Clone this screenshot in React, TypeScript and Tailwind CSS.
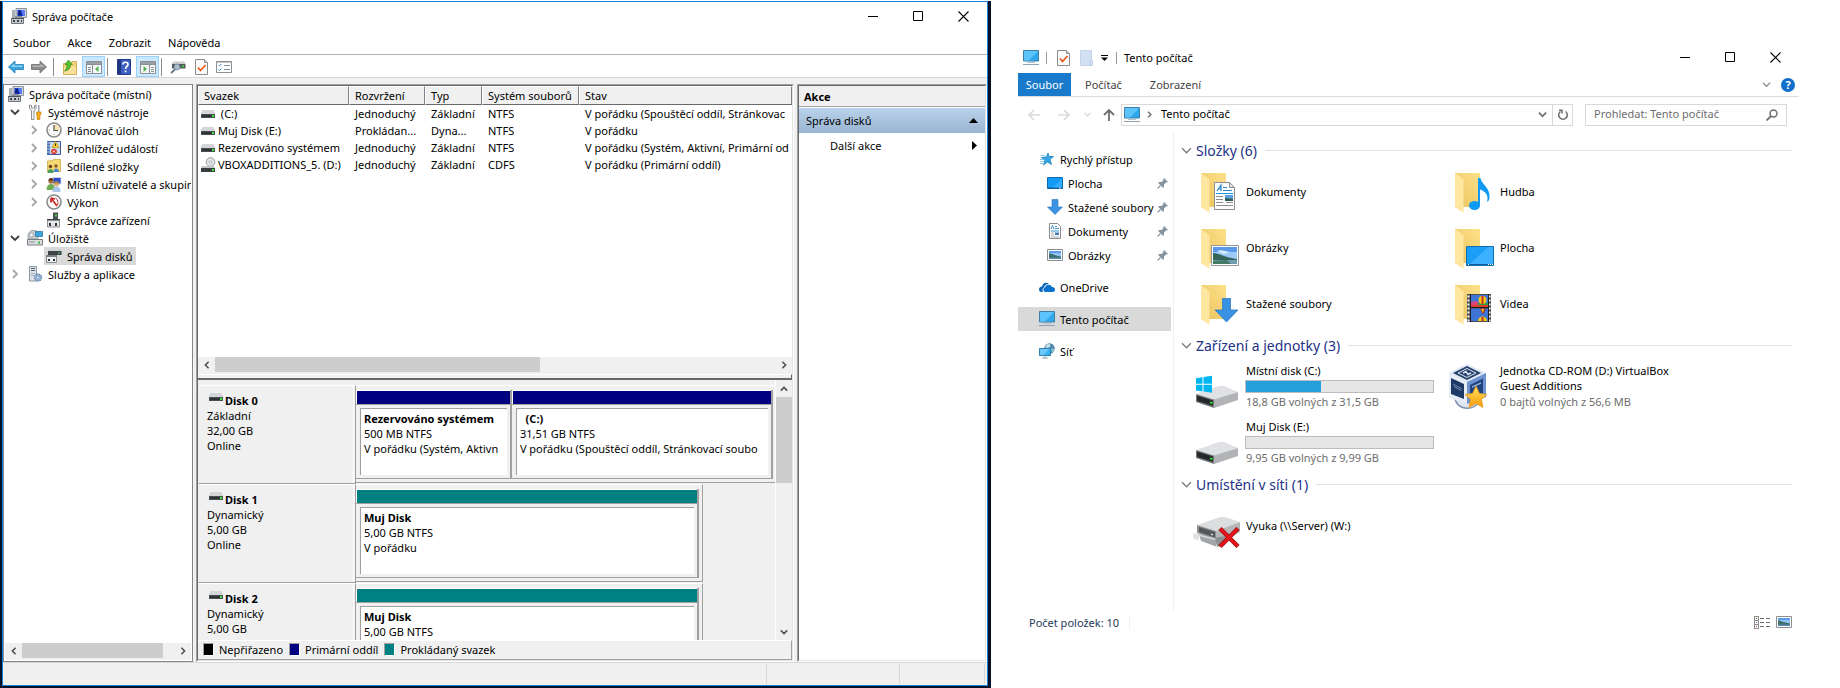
/**
 * Two desktop windows side by side.
 * Left: computer management console (tree / volumes / disk map / actions).
 * Right: file explorer on the "Tento počítač" location.
 */

import type { ReactNode } from "react";

type IconProps = { className?: string };

/* ── 16px icons ── */

function Svg16({ children, className = "" }: { children: ReactNode; className?: string }) {
  return (
    <svg viewBox="0 0 16 16" className={`h-4 w-4 shrink-0 ${className}`} aria-hidden="true">
      {children}
    </svg>
  );
}

function ConsoleIcon() {
  return (
    <Svg16>
      <path d="M5 0.5h10.5v9H5z" fill="#d5d9de" stroke="#8d949c" />
      <path d="M6.500 2h7.500v6H6.500z" fill="#1432c4" />
      <path d="M10 2h4v6h-2z" fill="#5b7df0" />
      <path d="M1 2h3v9H1z" fill="#a9b0b8" />
      <path d="M4 8h7v2H4z" fill="#8b9299" />
      <path d="M0.500 10.500h12v5h-12z" fill="#c5c9cd" stroke="#70777d" />
      <path d="M2 12h2v2H2zM6 12h2v2H6zM10 12h1v2h-1z" fill="#3c4248" />
      <path d="M0 10h13v1H0z" fill="#4d555c" />
      <path d="M8 3l1 0 1.500 4h-4z" fill="#0b1d75" />
    </Svg16>
  );
}

function ToolsIcon() {
  return (
    <Svg16>
      <path d="M2.500 1v3.500L4.500 7v8.500h2.500V7l2-2.500V1L7.500 1.500V4H4.500V1.500z" fill="#f2f3f4" stroke="#7f8489" strokeWidth="0.9" />
      <path d="M11 1h1.500v7H11z" fill="#9aa0a6" />
      <path d="M9.500 8h4.500v2.500l-1 1V15.500h-3v-4l-.5-1z" fill="#f5a81c" stroke="#c07d0a" strokeWidth="0.6" />
    </Svg16>
  );
}

function ClockIcon() {
  return (
    <Svg16>
      <circle cx="8" cy="8" r="7" fill="#fbfbfb" stroke="#8b8b8b" strokeWidth="1.600" />
      <path d="M8 8V2.500A5.500 5.500 0 0 1 13.500 8z" fill="#fbe3a6" />
      <path d="M8 3v5.500h4" fill="none" stroke="#4a4f58" strokeWidth="1.200" />
      <path d="M8 13v-1M3 8h1" stroke="#888" />
    </Svg16>
  );
}

function EventIcon() {
  return (
    <Svg16>
      <path d="M2.500 1.500h12v13h-12z" fill="#c9d9ee" stroke="#3d5a96" />
      <path d="M1 1h3v14H1z" fill="#4a6fb3" />
      <path d="M1 3h3M1 6h3M1 9h3M1 12h3" stroke="#dfe8f6" strokeWidth="0.8" />
      <path d="M9.500 1.500l3.500 6H6z" fill="#ffd42e" stroke="#b98c00" strokeWidth="0.6" />
      <path d="M9.500 3.500v2.500" stroke="#3b2d00" />
      <circle cx="8" cy="11.500" r="2.800" fill="#d9332b" />
      <path d="M7 10.500l2 2m0-2l-2 2" stroke="#fff" strokeWidth="0.9" />
    </Svg16>
  );
}

function SharedIcon() {
  return (
    <Svg16>
      <path d="M1.500 4V3l5-0.500 1-1h7v12h-13z" fill="#f6d873" stroke="#c9a23a" strokeWidth="0.7" />
      <circle cx="4.500" cy="8.500" r="1.800" fill="#70451c" />
      <path d="M1.500 15c0-3 1.500-4 3-4s3 1 3 4z" fill="#4da05c" />
      <circle cx="10" cy="8" r="1.800" fill="#8b5a28" />
      <path d="M7.500 14c0-2.500 1-3.500 2.500-3.500s3 1 3 3.500z" fill="#4d86c4" />
    </Svg16>
  );
}

function UsersIcon() {
  return (
    <Svg16>
      <path d="M6.500 1h9v7.500h-9z" fill="#d0d4d9" />
      <path d="M7.500 2h7v5.500h-7z" fill="#2c4fd2" />
      <circle cx="5" cy="5" r="2.700" fill="#a87242" />
      <path d="M2.500 4.500C2.500 1 7.500 1 7.500 4.500z" fill="#5b3515" />
      <path d="M0.500 14c0-4 1.500-6 4.500-6s4 2 4 6z" fill="#6fae54" />
      <circle cx="10.500" cy="8" r="2.500" fill="#e0b07f" />
      <path d="M8 7.500C8 4.500 13 4.500 13 7.500z" fill="#b0803a" />
      <path d="M6.500 16c0-4 1.500-5.500 4-5.500s4 1.500 4 5.500z" fill="#a8c6ea" />
    </Svg16>
  );
}

function GaugeIcon() {
  return (
    <Svg16>
      <circle cx="8" cy="8" r="7" fill="#fdfdfd" stroke="#8a8a8a" strokeWidth="1.600" />
      <path d="M5 4l6 8M5 4v4.500M5 4l4 1" stroke="#d22626" strokeWidth="1.700" fill="none" />
      <path d="M9.500 4c2.500 1.500 3 4.500 2 7" stroke="#c93a3a" fill="none" />
    </Svg16>
  );
}

function DeviceIcon() {
  return (
    <Svg16>
      <path d="M7 0.500h5v7H7z" fill="#4b5055" />
      <path d="M9 2.500h2v2H9z" fill="#45d94a" />
      <path d="M1 7h13v2H1z" fill="#43484d" />
      <path d="M1.500 8.500h12v6.500h-12z" fill="#e3e5e7" stroke="#8b9096" />
      <path d="M3 11h2v3H3zM9 11h2v3H9z" fill="#30353a" />
    </Svg16>
  );
}

function StorageIcon() {
  return (
    <Svg16>
      <path d="M1 4l3-3.500h5L11 4v5H1z" fill="#c8cccf" stroke="#8b9095" strokeWidth="0.7" />
      <circle cx="4.500" cy="5" r="2" fill="#f3f4f5" stroke="#8f949a" strokeWidth="0.7" />
      <path d="M8.500 1.500h7v5h-7z" fill="#39a5dc" stroke="#1d6f9d" strokeWidth="0.7" />
      <path d="M0.500 9.500h15v5.500h-15z" fill="#dcdee0" stroke="#767c82" />
      <path d="M11 11.500h2v2h-2z" fill="#34b244" />
      <path d="M2 12h6" stroke="#8b9095" />
    </Svg16>
  );
}

function DiskMgmtIcon() {
  return (
    <Svg16>
      <path d="M2 3l2-2h10l1.500 2z" fill="#d0d3d6" />
      <path d="M2 3h13.500v4H2z" fill="#3d4247" />
      <path d="M12 4.500h2v1h-2z" fill="#3fe04a" />
      <path d="M0.500 8.500h10v6h-10z" fill="#eceeef" stroke="#8b9096" />
      <path d="M0 7h11v2H0z" fill="#7a7f84" />
      <path d="M2 11h2v2H2zM7 11h2v2H7z" fill="#30353a" />
    </Svg16>
  );
}

function ServicesIcon() {
  return (
    <Svg16>
      <path d="M2.500 0.500h7v14.500h-7z" fill="#dce2e8" stroke="#8996a3" />
      <path d="M4 2.500h4M4 4.500h4" stroke="#566371" />
      <path d="M4 7.500h4M4 9.500h3" stroke="#a5b1bc" />
      <circle cx="11" cy="11.500" r="3.500" fill="#9dbbdc" stroke="#5c82ae" strokeWidth="1.300" strokeDasharray="1.500 0.900" />
      <circle cx="11" cy="11.500" r="1.300" fill="#fff" stroke="#5c82ae" strokeWidth="0.7" />
    </Svg16>
  );
}

function DriveIcon({ className = "" }: IconProps) {
  return (
    <svg viewBox="0 0 14 8" className={`h-2 w-3.5 shrink-0 ${className}`} shapeRendering="crispEdges" aria-hidden="true">
      <path d="M1 0h12l1 4H0z" fill="#d3d5d8" />
      <path d="M0 4h14v4H0z" fill="#4c4f52" />
      <path d="M1 5h12v2H1z" fill="#303336" />
      <path d="M11 5h2v2h-2z" fill="#35f03a" />
    </svg>
  );
}

function CdDriveIcon() {
  return (
    <svg viewBox="0 0 15 16" className="-mr-px h-4 w-[15px] shrink-0" aria-hidden="true">
      <circle cx="9.500" cy="5" r="4.300" fill="#e4e6e8" stroke="#979b9f" />
      <circle cx="9.500" cy="5" r="1.300" fill="#fff" stroke="#979b9f" strokeWidth="0.7" />
      <path d="M1 9h12l1 2H0z" fill="#c5c8cb" />
      <path d="M0 11h14v4H0z" fill="#3a3d40" />
      <path d="M11 12h2v2h-2z" fill="#35f03a" />
    </svg>
  );
}

function BackArrow() {
  return (
    <Svg16>
      <path d="M0.500 8L7 2v3.500h8.500v5H7V14z" fill="#3aa4dc" stroke="#1f7fb8" strokeWidth="0.8" />
      <path d="M2.500 8L6.500 4.500V6.500h8v1.500z" fill="#8fd0f2" />
    </Svg16>
  );
}

function ForwardArrow() {
  return (
    <Svg16>
      <path d="M15.500 8L9 2v3.500H0.500v5H9V14z" fill="#8d8d8d" stroke="#6b6b6b" strokeWidth="0.8" />
      <path d="M13.500 8L9.500 4.500V6.500h-8v1.500z" fill="#b3b3b3" />
    </Svg16>
  );
}

function FolderUpIcon() {
  return (
    <Svg16>
      <path d="M1.500 4.500h7l1.500-2h4.500v13h-13z" fill="#f3d47c" stroke="#c59f3f" strokeWidth="0.8" />
      <path d="M2 8h12v7H2z" fill="#f8e09a" />
      <path d="M2.500 12c1.500-1 2.500-3 2.500-6.500H3L6.500 1l4 4.500H8.500c0 4-2 6-6 6.500z" fill="#55c02e" stroke="#2f8416" strokeWidth="0.6" />
    </Svg16>
  );
}

function PaneIcon({ side }: { side: "left" | "right" }) {
  return (
    <Svg16 className={side === "right" ? "-scale-x-100" : ""}>
      <path d="M0.500 2.500h15v12h-15z" fill="#f7f8f9" stroke="#8a8f94" />
      <path d="M1 3h14v2H1z" fill="#9aa0a6" />
      <path d="M1 5.500h14M6.500 6v8M2 8.500h3M2 10.500h3M2 12.500h3" stroke="#8a8f94" />
      <path d="M12.500 7v6L9 10z" fill="#4cb648" />
    </Svg16>
  );
}

function HelpBookIcon() {
  return (
    <svg viewBox="0 0 14 16" className="h-4 w-3.5 shrink-0" aria-hidden="true">
      <path d="M0.500 0.500h13v15h-13z" fill="#3f5fc4" stroke="#24388c" />
      <path d="M1 1h3v14H1z" fill="#20357f" />
      <path d="M6 5.500c0-3 5-3 5 0 0 2-2.500 2-2.500 4.500" fill="none" stroke="#fff" strokeWidth="1.700" />
      <path d="M7.700 11.500h1.700v1.700H7.700z" fill="#fff" />
    </svg>
  );
}

function DriveSearchIcon() {
  return (
    <Svg16>
      <path d="M2 4l2-1.500h10l1.500 1.500v1H2z" fill="#c9ccce" />
      <path d="M2 5h13.500v4.500H2z" fill="#55595d" />
      <path d="M12 6.500h2v1.500h-2z" fill="#37e53c" />
      <circle cx="7" cy="8" r="3" fill="#a9bccb" stroke="#75889a" strokeWidth="0.8" />
      <path d="M5 10.500L1 14" stroke="#68727b" strokeWidth="1.700" />
    </Svg16>
  );
}

function CheckDocIcon() {
  return (
    <svg viewBox="0 0 13 16" className="h-4 w-[13px] shrink-0" aria-hidden="true">
      <path d="M0.500 0.500h9l3 3v12h-12z" fill="#fbfbfb" stroke="#8b8b8b" />
      <path d="M9.500 0.500v3h3" fill="#dadada" stroke="#8b8b8b" />
      <path d="M3 8.500l2.500 3 5-5.500" fill="none" stroke="#e8591a" strokeWidth="1.700" />
    </svg>
  );
}

function ListPaneIcon() {
  return (
    <Svg16>
      <path d="M0.500 2.500h15v11h-15z" fill="#fff" stroke="#8a8f94" />
      <path d="M1 3h14" stroke="#8a8f94" />
      <path d="M2.500 6l1 1 2-2M2.500 10.500l1 1 2-2" fill="none" stroke="#3c8fd0" />
      <path d="M8 6.500h6M8 10.500h6" stroke="#8a8f94" />
    </Svg16>
  );
}

function MonitorIcon() {
  return (
    <Svg16>
      <path d="M0.500 0.500h15v10.500h-15z" fill="#2fa9ee" stroke="#3f7fa6" />
      <path d="M1 1h14L6 10.500H1z" fill="#5cc3fb" />
      <path d="M4 12.500h8" stroke="#b7c4cf" />
      <path d="M0 14.500h16" stroke="#8fa2b3" />
    </Svg16>
  );
}

function NewFolderIcon() {
  return (
    <svg viewBox="0 0 13 16" className="h-4 w-[13px] shrink-0" aria-hidden="true">
      <path d="M0.500 0.500h11v9l1 .500v5.500h-12z" fill="#d3e0f3" stroke="#c5d4ea" />
      <path d="M10 9.500v6" stroke="#b7c9e4" />
    </svg>
  );
}

function StarIcon() {
  return (
    <Svg16>
      <path d="M9 2l1 3.500h4.500L11 8.500l1.500 5L8.500 11l-4 3 1.500-4.500L2.500 6.500 7.500 6z" fill="#35a7e6" stroke="#1980bd" strokeWidth="0.8" />
      <path d="M2 4.500h4M1 8.500h4M1.500 10.500h3.500M1 12.500h3" stroke="#79c0ea" strokeWidth="0.9" />
    </Svg16>
  );
}

function DesktopIcon() {
  return (
    <Svg16>
      <path d="M0.500 2.500h15v11h-15z" fill="#129bf6" stroke="#0f69ad" />
      <path d="M5 13L15 4v9z" fill="#32adff" />
      <path d="M1 13h14" stroke="#0f5d9b" />
      <path d="M12 13h2" stroke="#fff" strokeDasharray="1 0.500" />
    </Svg16>
  );
}

function DownArrowIcon() {
  return (
    <Svg16>
      <path d="M5 0.500h6V8h4.500L8 15.500 0.500 8H5z" fill="#3b93e2" stroke="#2a75bc" strokeWidth="0.6" />
    </Svg16>
  );
}

function DocIcon() {
  return (
    <Svg16>
      <path d="M2.500 0.500h8l3 3v12h-11z" fill="#fdfdfd" stroke="#8b8b8b" />
      <path d="M4 6l1.500-3.500L7 6M8 3.500h2M8 5.500h4" fill="none" stroke="#2f86c6" strokeWidth="0.9" />
      <path d="M4 8h8" stroke="#2f9bd8" />
      <path d="M4 10h3M4 12h3M4 14h8" stroke="#9b9b9b" strokeWidth="0.8" />
      <path d="M8 9.500h4V12H8z" fill="#3d7fb4" />
    </Svg16>
  );
}

function PictureIcon({ className = "" }: IconProps) {
  return (
    <Svg16 className={className}>
      <path d="M0.500 2.500h15v11h-15z" fill="#fff" stroke="#8b8f93" />
      <path d="M2 4h12v8H2z" fill="#8fc2f2" />
      <path d="M2 4h12v2H2z" fill="#5e9be8" />
      <path d="M2 6.500c3 0 5 2 12 3V12H2z" fill="#3f6f68" />
      <path d="M2 10.500h12V12H2z" fill="#5988ae" />
    </Svg16>
  );
}

function CloudIcon() {
  return (
    <Svg16>
      <path d="M0 10.500C0 8.500 1.500 7.500 3 7.500 3.200 4.500 7 2 10 5 7 5 5.500 6.500 5 8.500 3.500 9 3 11.500 4 13H2.500C1 13 0 12 0 10.500z" fill="#0a64b8" />
      <path d="M6 8.500C7 5 11.500 5 13 8c2 0 3 1.300 3 2.700 0 1.300-1 2.300-2.300 2.300H6.500C3.800 13 3.800 9 6 8.500z" fill="#0a72cc" />
    </Svg16>
  );
}

function NetworkIcon() {
  return (
    <Svg16>
      <circle cx="10.500" cy="5.500" r="5.200" fill="#4f86a8" />
      <path d="M8 1.500c2-1 4 0 3.500 1.500S9 4.500 7.500 5 6 3 8 1.500z" fill="#bfe0ea" />
      <path d="M12 6c2-1 3 0 3 1s-1 2.500-2 2.500z" fill="#8ec3d6" />
      <path d="M0.500 5.500h11v7h-11z" fill="#36b0f2" stroke="#2e7fb0" />
      <path d="M1 6h9L5 12H1z" fill="#6cc8fb" />
      <path d="M3 15h6M6 13v2" stroke="#8fa2b3" />
    </Svg16>
  );
}

function PinIcon() {
  return (
    <svg viewBox="0 0 11 11" className="h-[11px] w-[11px] shrink-0" aria-hidden="true">
      <path d="M7 0l4 4-1 .500L9 4.500 7 6.500 7 9 6 9.800 1.200 5 2 4l2.500 0 2-2L6.300 1z" fill="#8593a0" />
      <path d="M3.500 7.500L0.500 10.500" stroke="#8593a0" strokeWidth="1.100" />
    </svg>
  );
}

/* ── Chevron used by scrollbars, trees and headings ── */
const CHEVRON = {
  left: "M7 1L3 5l4 4",
  right: "M3 1l4 4-4 4",
  up: "M1 7l4-4 4 4",
  down: "M1 3l4 4 4-4",
};

function Chevron({ dir, className = "", width = 2 }: { dir: keyof typeof CHEVRON; className?: string; width?: number }) {
  return (
    <svg viewBox="0 0 10 10" className={`shrink-0 ${className}`} fill="none" stroke="currentColor" strokeWidth={width} aria-hidden="true">
      <path d={CHEVRON[dir]} />
    </svg>
  );
}

function WindowControls() {
  return (
    <div className="flex items-center gap-[34px]">
      <button type="button" aria-label="Minimalizovat" className="flex h-6 w-[11px] items-center">
        <svg viewBox="0 0 11 11" className="h-[11px] w-[11px]" shapeRendering="crispEdges"><path d="M0 5.500h10" stroke="#000" /></svg>
      </button>
      <button type="button" aria-label="Maximalizovat" className="flex h-6 w-[11px] items-center">
        <svg viewBox="0 0 11 11" className="h-[11px] w-[11px]"><path d="M0.500 0.500h9v9h-9z" fill="none" stroke="#000" /></svg>
      </button>
      <button type="button" aria-label="Zavřít" className="flex h-6 w-[11px] items-center">
        <svg viewBox="0 0 11 11" className="h-[11px] w-[11px]"><path d="M0.500 0.500l10 10M10.500 0.500l-10 10" stroke="#000" strokeWidth="1.100" /></svg>
      </button>
    </div>
  );
}

/* ── Large explorer icons, 48px canvas ── */

function Svg48({ children }: { children: ReactNode }) {
  return (
    <svg viewBox="0 0 48 48" className="h-12 w-12 shrink-0" aria-hidden="true">
      {children}
    </svg>
  );
}

function Landscape() {
  return (
    <g>
      <path d="M18.500 21.500h27v20h-27z" fill="#fff" stroke="#94989c" />
      <path d="M20 23h24v17H20z" fill="#9ccbf5" />
      <path d="M20 23h24v5H20z" fill="#5b98ea" />
      <path d="M24 27c4-2 8 0 13 1l-6 2z" fill="#d9ecfb" />
      <path d="M20 29c6 0 10 4 24 6v2H20z" fill="#35645a" />
      <path d="M20 36h24v4H20z" fill="#6f9fae" />
      <path d="M20 37l14-1 4 4H20z" fill="#447b68" />
    </g>
  );
}

function VideoStrip() {
  return (
    <g>
      <path d="M20 14h24v28H20z" fill="#4d4d4d" />
      <path d="M21.500 15.500v26M42.500 15.500v26" stroke="#fff" strokeWidth="2" strokeDasharray="2 2" />
      <path d="M24 15h17v12H24zM24 28.500h17V41H24z" fill="#3d74d6" />
      <path d="M24 22l5-1 4 3v3h-9z" fill="#e0457b" />
      <path d="M31 23h10v4H31z" fill="#2f9e3f" />
      <path d="M24 25h17v2H24z" fill="#d93f2a" />
      <circle cx="35.500" cy="20" r="4" fill="#f5c819" />
      <path d="M35.500 16v8" stroke="#c53318" strokeWidth="2" />
      <path d="M33 28.500h6l-3 6z" fill="#b3231c" />
      <path d="M34 29h3l-1 4z" fill="#f5c819" />
      <path d="M31 41c0-6 9-6 9 0z" fill="#f5c819" />
      <path d="M34.500 37h2v4h-2z" fill="#c53318" />
      <path d="M23.500 14v28M41.500 14v28M23.500 27.500h18" stroke="#1d1d1d" />
    </g>
  );
}

function FolderIcon({ kind }: { kind: string }) {
  return (
    <Svg48>
      <defs>
        <linearGradient id="folderBack" x1="0" y1="1" x2="1" y2="0">
          <stop offset="0" stopColor="#e9c25c" />
          <stop offset="1" stopColor="#ffe18a" />
        </linearGradient>
      </defs>
      <path d="M8 5h25v34H16z" fill="url(#folderBack)" />
      <path d="M8 5l8.500 6.500V45L8 39z" fill="#ffe79f" />
      {kind === "docs" && (
        <g>
          <path d="M21.500 14.500h15l5 5v22h-20z" fill="#fdfdfd" stroke="#8b8f93" />
          <path d="M36.500 14.500v5h5z" fill="#e4e4e4" stroke="#8b8f93" />
          <path d="M24 23l4-6v6M25 21h3M30 19.500h4M30 22.500h9" stroke="#2b86c8" strokeWidth="1.200" fill="none" />
          <path d="M23 25.500h17" stroke="#1999de" />
          <path d="M23 28.500h7M23 31.500h7M23 34.500h7M23 37.500h17M33 34.500h7" stroke="#8d8d8d" />
          <path d="M32 27h8v6h-8z" fill="#58a0dd" />
          <path d="M32 30l8 1v2h-8z" fill="#2c5b55" />
        </g>
      )}
      {kind === "pictures" && <Landscape />}
      {kind === "downloads" && (
        <path d="M29.500 18.500h8V30H45L33.500 42 22 30h7.500z" fill="#3a92e3" stroke="#2c78c2" strokeWidth="0.8" />
      )}
      {kind === "music" && (
        <g fill="#0f9bf5">
          <ellipse cx="27.500" cy="37.500" rx="5.500" ry="4.500" />
          <path d="M31 10h2.500c1 7 10 9 9 20-.5 3-2 4-2.500 3.500 2-6-1.500-10-7-12V38H31z" />
        </g>
      )}
      {kind === "desktop" && (
        <g>
          <path d="M19.500 22.500h27v19h-27z" fill="#1a9ff8" stroke="#0f6fb3" />
          <path d="M23 40l18-17h5v17z" fill="#3db1ff" />
          <path d="M20 40.500h26" stroke="#0f5d9b" />
          <path d="M41 40.500h5M21 40.500h1" stroke="#fff" strokeDasharray="1 1" />
        </g>
      )}
      {kind === "videos" && <VideoStrip />}
    </Svg48>
  );
}

function LocalDriveIcon({ system = false }: { system?: boolean }) {
  return (
    <Svg48>
      <path d="M3 31l23-8h5l14 6-23.500 7.500z" fill="#dfe1e4" />
      <path d="M21 36.500L45 29v8L21 45z" fill="#b1b3b6" />
      <path d="M3 31l18 5.500V45L3 39z" fill="#77797b" />
      <path d="M4 32.500l16 5V43L4 38z" fill="#26292b" />
      <path d="M17 38.500l2.500.5v2l-2.500-.5z" fill="#25e02c" />
      {system && (
        <path d="M3 15.200l6.500-1v6.600H3zM10.500 14.100l8.500-1.300v8H10.500zM3 21.800h6.500v6.600l-6.500-1zM10.500 21.800H19v8l-8.500-1.300z" fill="#00b6f0" />
      )}
    </Svg48>
  );
}

function NetworkDriveIcon() {
  return (
    <Svg48>
      <path d="M4 23l23-8h5l15 5-24 9z" fill="#dcdddf" />
      <path d="M23 29l24-9v10L28 40l-5-3z" fill="#b5b6b8" />
      <path d="M4 23l19 6v8.500L4 31z" fill="#8e9092" />
      <path d="M6 25l16 5v5.500L6 30z" fill="#54575a" />
      <path d="M18 31.500l2 .5v1.500l-2-.5z" fill="#d7d9da" />
      <path d="M6 32l17 4.500v8L8 39z" fill="#a2a5a8" />
      <path d="M0 32c2-1 4-1 6 0v6c-2 0-4-.5-6-2z" fill="#dfe1e2" />
      <path d="M7 33.500l16 4" stroke="#d6d8da" strokeWidth="1.800" />
      <path d="M22 36l10-2v9l-8 2z" fill="#8d9093" />
      <path d="M27 26.500L45 44.500M45 26.500L27 44.500" stroke="#9b1212" strokeWidth="4.500" />
      <path d="M27.300 26.800L44.700 44.200M44.700 26.800L27.300 44.200" stroke="#e8141c" strokeWidth="3" />
    </Svg48>
  );
}

function VirtualBoxIcon() {
  return (
    <Svg48>
      <defs>
        <linearGradient id="starFill" x1="0" y1="0" x2="0" y2="1">
          <stop offset="0" stopColor="#ffe15c" />
          <stop offset="1" stopColor="#f79a0c" />
        </linearGradient>
      </defs>
      <path d="M8 36c3 12 20 12 24 2" fill="#dfe5ef" stroke="#7d8dab" strokeWidth="1.500" />
      <path d="M20 1l19 9v24L20 41 2 35V10z" fill="#e6edf6" />
      <path d="M20 1l19 9-19 9L2 10z" fill="#dde8f4" />
      <path d="M20 3l14 7-14 7L6 10z" fill="#26416b" />
      <path d="M20 5.500l9 4.500-9 4.500L11 10z" fill="none" stroke="#dbe6f2" />
      <path d="M16 10l3-1.500 2 3 3-1.500" fill="none" stroke="#dbe6f2" strokeWidth="1.400" />
      <path d="M4 15l13 6v15L4 31z" fill="#1d3b66" />
      <path d="M6 21l9 5M7 23.500l7 4" stroke="#7892b5" />
      <path d="M20 19l19-9v24l-19 7z" fill="#6d92d2" />
      <path d="M23 22l13-6.500V30L23 35z" fill="#1f417c" />
      <path d="M25 24l9-4" stroke="#8aa6d4" strokeWidth="1.500" />
      <path d="M29 23l3.500 7.500 7.500 1-5.500 5 1.500 8-7-4-7 4 1.500-8-5.500-5 7.500-1z" fill="url(#starFill)" stroke="#e49a1f" strokeWidth="0.8" />
    </Svg48>
  );
}

/* ── Computer management window ── */

type TreeItem = { label: string; level: number; icon: ReactNode; open?: boolean; selected?: boolean };

const TREE: TreeItem[] = [
  { label: "Správa počítače (místní)", level: 0, icon: <ConsoleIcon /> },
  { label: "Systémové nástroje", level: 1, icon: <ToolsIcon />, open: true },
  { label: "Plánovač úloh", level: 2, icon: <ClockIcon />, open: false },
  { label: "Prohlížeč událostí", level: 2, icon: <EventIcon />, open: false },
  { label: "Sdílené složky", level: 2, icon: <SharedIcon />, open: false },
  { label: "Místní uživatelé a skupiny", level: 2, icon: <UsersIcon />, open: false },
  { label: "Výkon", level: 2, icon: <GaugeIcon />, open: false },
  { label: "Správce zařízení", level: 2, icon: <DeviceIcon /> },
  { label: "Úložiště", level: 1, icon: <StorageIcon />, open: true },
  { label: "Správa disků", level: 2, icon: <DiskMgmtIcon />, selected: true },
  { label: "Služby a aplikace", level: 1, icon: <ServicesIcon />, open: false },
];

const TREE_INDENT = ["pl-px", "", "pl-[19px]"];

function TreeRow({ item }: { item: TreeItem }) {
  return (
    <li className={`flex h-[18px] items-center ${TREE_INDENT[item.level]}`}>
      {item.level > 0 && (
        <span className="flex w-5 shrink-0 justify-center">
          {item.open === true && <Chevron dir="down" className="h-2.5 w-2.5 text-[#404040]" width={1.8} />}
          {item.open === false && <Chevron dir="right" className="h-2.5 w-2.5 text-[#a6a6a6]" width={1.8} />}
        </span>
      )}
      <button
        type="button"
        className={`flex h-[18px] items-center gap-[5px] whitespace-nowrap pl-0.5 pr-1 ${item.selected ? "bg-[#d9d9d9]" : ""}`}
      >
        {item.icon}
        {item.label}
      </button>
    </li>
  );
}

function HScroll({ thumb }: { thumb: string }) {
  return (
    <div className="flex h-[17px] shrink-0 bg-[#f0f0f0] pb-0.5 text-[#505050]">
      <button type="button" aria-label="Posunout vlevo" className="flex w-[17px] items-center justify-center">
        <Chevron dir="left" className="h-2 w-2" />
      </button>
      <div className="flex-1">
        <div className={`h-full bg-[#cdcdcd] ${thumb}`} />
      </div>
      <button type="button" aria-label="Posunout vpravo" className="flex w-[17px] items-center justify-center">
        <Chevron dir="right" className="h-2 w-2" />
      </button>
    </div>
  );
}

function Sunken({ children, className = "" }: { children: ReactNode; className?: string }) {
  return (
    <div className={`flex border border-b-white border-l-[#a0a0a0] border-r-white border-t-[#a0a0a0] ${className}`}>
      <div className="flex min-w-0 flex-1 flex-col border border-b-[#e3e3e3] border-l-[#696969] border-r-[#e3e3e3] border-t-[#696969]">
        {children}
      </div>
    </div>
  );
}

const VOLUMES = [
  { name: "\u00a0(C:)", layout: "Jednoduchý", type: "Základní", fs: "NTFS", state: "V pořádku (Spouštěcí oddíl, Stránkovac" },
  { name: "Muj Disk (E:)", layout: "Prokládan...", type: "Dyna...", fs: "NTFS", state: "V pořádku" },
  { name: "Rezervováno systémem", layout: "Jednoduchý", type: "Základní", fs: "NTFS", state: "V pořádku (Systém, Aktivní, Primární od" },
  { name: "VBOXADDITIONS_5. (D:)", layout: "Jednoduchý", type: "Základní", fs: "CDFS", state: "V pořádku (Primární oddíl)", cd: true },
];

function VolumeTable() {
  const head =
    "h-[19px] border-b border-l border-r border-t border-b-[#696969] border-l-white border-r-[#808080] border-t-white bg-[#f0f0f0] p-0 pl-[5px] text-left font-normal";
  const cell = "h-[17px] overflow-hidden whitespace-nowrap p-0 pl-1.5";
  return (
    <table className="w-full table-fixed border-separate border-spacing-0">
      <colgroup>
        <col className="w-[151px]" />
        <col className="w-[76px]" />
        <col className="w-[57px]" />
        <col className="w-[97px]" />
        <col />
      </colgroup>
      <thead>
        <tr>
          <th className={head}>Svazek</th>
          <th className={head}>Rozvržení</th>
          <th className={head}>Typ</th>
          <th className={`${head} whitespace-nowrap`}>Systém souborů</th>
          <th className={head}>Stav</th>
        </tr>
      </thead>
      <tbody>
        {VOLUMES.map((v) => (
          <tr key={v.name}>
            <td className="h-[17px] overflow-hidden p-0 pl-[3px]">
              <span className="flex h-[17px] items-center gap-[3px] whitespace-nowrap">
                {v.cd ? <CdDriveIcon /> : <DriveIcon />}
                {v.name}
              </span>
            </td>
            <td className={cell}>{v.layout}</td>
            <td className={cell}>{v.type}</td>
            <td className={cell}>{v.fs}</td>
            <td className={cell}>{v.state}</td>
          </tr>
        ))}
      </tbody>
    </table>
  );
}

type Volume = { name: string; size: string; state?: string; grow: string; color: string };

const DISKS: { name: string; type: string; size: string; status?: string; partial?: boolean; volumes: Volume[] }[] = [
  {
    name: "Disk 0",
    type: "Základní",
    size: "32,00 GB",
    status: "Online",
    volumes: [
      { name: "Rezervováno systémem", size: "500 MB NTFS", state: "V pořádku (Systém, Aktivn", grow: "flex-[155]", color: "bg-[#000080]" },
      { name: "\u00a0 (C:)", size: "31,51 GB NTFS", state: "V pořádku (Spouštěcí oddíl, Stránkovací soubo", grow: "flex-[261]", color: "bg-[#000080]" },
    ],
  },
  {
    name: "Disk 1",
    type: "Dynamický",
    size: "5,00 GB",
    status: "Online",
    partial: true,
    volumes: [{ name: "Muj Disk", size: "5,00 GB NTFS", state: "V pořádku", grow: "flex-1", color: "bg-[#008080]" }],
  },
  {
    name: "Disk 2",
    type: "Dynamický",
    size: "5,00 GB",
    partial: true,
    volumes: [{ name: "Muj Disk", size: "5,00 GB NTFS", grow: "flex-1", color: "bg-[#008080]" }],
  },
];

function DiskRow({ disk }: { disk: (typeof DISKS)[number] }) {
  return (
    <div className="flex h-[99px] shrink-0">
      <div className="w-[158px] shrink-0 border border-b-[#a0a0a0] border-l-[#f0f0f0] border-r-[#a0a0a0] border-t-white">
        <div className="mr-px h-full border-r border-white pl-2 pt-[7px] leading-[15px]">
          <div className="flex gap-0.5 pl-0.5">
            <DriveIcon />
            <strong>{disk.name}</strong>
          </div>
          <div>{disk.type}</div>
          <div>{disk.size}</div>
          {disk.status && <div>{disk.status}</div>}
        </div>
      </div>
      <div className="flex min-w-0 flex-1">
        <div
          className={`flex h-[98px] min-w-0 border-b border-t border-b-[#a0a0a0] border-t-white pb-[3px] pt-1 ${
            disk.partial ? "flex-[19] border-r border-r-[#a0a0a0] pr-[3px]" : "flex-1 pr-0.5"
          }`}
        >
          {disk.volumes.map((v) => (
            <div key={v.name} className={`flex min-w-0 flex-col border-b border-r-2 border-[#a0a0a0] ${v.grow}`}>
              <div className={`h-[14px] shrink-0 border-l border-t border-l-white border-t-white ${v.color}`} />
              <div className="flex min-h-0 flex-1 border-t border-[#a0a0a0] p-[3px] pl-1 pr-[3px]">
                <div className="min-w-0 flex-1 overflow-hidden whitespace-nowrap border-l border-t border-[#a0a0a0] bg-white pl-[3px] pt-0.5 leading-[15px]">
                  <strong className="block whitespace-pre">{v.name}</strong>
                  <div>{v.size}</div>
                  {v.state && <div>{v.state}</div>}
                </div>
              </div>
            </div>
          ))}
        </div>
        {disk.partial && <div className="flex-[4]" />}
      </div>
    </div>
  );
}

const LEGEND = [
  { label: "Nepřiřazeno", color: "bg-black" },
  { label: "Primární oddíl", color: "bg-[#000080]" },
  { label: "Prokládaný svazek", color: "bg-[#008080]" },
];

function ManagementWindow() {
  return (
    <div className="flex min-w-0 bg-[#03122a] pb-0.5 pl-0.5 pr-[3px]">
      <section className="flex min-w-0 flex-1 flex-col border border-[#1a80d2] bg-[#f0f0f0]">
        <header className="flex h-[30px] shrink-0 items-center gap-[5px] bg-white pb-0.5 pl-2 pr-[18px]">
          <ConsoleIcon />
          <h1 className="flex-1">Správa počítače</h1>
          <WindowControls />
        </header>
        <nav className="flex h-[23px] shrink-0 items-center gap-[17px] border-b border-[#b5b5b5] bg-white pb-px pl-[10px]">
          <button type="button">Soubor</button>
          <button type="button">Akce</button>
          <button type="button">Zobrazit</button>
          <button type="button">Nápověda</button>
        </nav>
        <div className="mb-1.5 flex h-[23px] shrink-0 items-center border-b border-[#d5d5d5] bg-white pl-[5px] pt-px">
          <button type="button" aria-label="Zpět"><BackArrow /></button>
          <button type="button" aria-label="Vpřed" className="ml-[7px]"><ForwardArrow /></button>
          <span className="mx-1.5 h-[18px] w-px bg-[#8c8c8c]" />
          <button type="button" aria-label="O úroveň výš" className="ml-0.5"><FolderUpIcon /></button>
          <button type="button" aria-label="Strom konzoly" className="ml-1 flex h-[21px] w-[23px] items-center justify-center border border-[#99d1ff] bg-[#cce8ff]">
            <PaneIcon side="left" />
          </button>
          <span className="mx-0.5 h-[18px] w-px bg-[#8c8c8c]" />
          <button type="button" aria-label="Nápověda" className="ml-[7px]"><HelpBookIcon /></button>
          <button type="button" aria-label="Podokno akcí" className="ml-[5px] flex h-[21px] w-[23px] items-center justify-center border border-[#99d1ff] bg-[#cce8ff]">
            <PaneIcon side="right" />
          </button>
          <span className="mx-0.5 h-[18px] w-px bg-[#8c8c8c]" />
          <button type="button" aria-label="Prohledat disky" className="ml-1.5"><DriveSearchIcon /></button>
          <button type="button" aria-label="Vlastnosti" className="ml-[9px]"><CheckDocIcon /></button>
          <button type="button" aria-label="Seznam" className="ml-2"><ListPaneIcon /></button>
        </div>

        <div className="flex min-h-0 flex-1 gap-[3px]">
          {/* Console tree */}
          <aside className="flex w-[190px] shrink-0 flex-col border border-[#828790] bg-white px-px pb-px">
            <ul className="min-h-0 flex-1 overflow-hidden">
              {TREE.map((item) => (
                <TreeRow key={item.label} item={item} />
              ))}
            </ul>
            <HScroll thumb="w-[93%]" />
          </aside>

          {/* Volume list over disk map */}
          <Sunken className="min-w-0 flex-1">
            <div className="flex min-h-0 flex-[289] flex-col bg-white">
              <div className="min-h-0 flex-1 overflow-hidden">
                <VolumeTable />
              </div>
              <HScroll thumb="w-[58%]" />
            </div>
            <div className="h-1.5 shrink-0 border-b-2 border-r border-t border-b-[#696969] border-r-[#696969] border-t-white" />
            <div className="flex min-h-0 flex-[260]">
              <div className="flex min-w-0 flex-1 flex-col overflow-hidden pt-[5px]">
                {DISKS.map((disk) => (
                  <DiskRow key={disk.name} disk={disk} />
                ))}
              </div>
              <div className="flex w-[17px] shrink-0 flex-col border-l border-white text-[#505050]">
                <button type="button" aria-label="Posunout nahoru" className="flex h-[17px] items-center justify-center">
                  <Chevron dir="up" className="h-2 w-2" />
                </button>
                <div className="flex-1">
                  <div className="h-[38%] bg-[#cdcdcd]" />
                </div>
                <button type="button" aria-label="Posunout dolů" className="flex h-[17px] items-center justify-center">
                  <Chevron dir="down" className="h-2 w-2" />
                </button>
              </div>
            </div>
            <div className="flex h-5 shrink-0 items-center gap-1.5 border-b border-r border-t border-b-[#a0a0a0] border-r-[#a0a0a0] border-t-white pb-0.5 pl-[5px]">
              {LEGEND.map((l) => (
                <span key={l.label} className="flex items-center gap-[5px]">
                  <span className={`h-[13px] w-[11px] border border-b-white border-l-[#a0a0a0] border-r-white border-t-[#a0a0a0] ${l.color}`} />
                  {l.label}
                </span>
              ))}
            </div>
          </Sunken>

          {/* Actions pane */}
          <Sunken className="w-[190px] shrink-0">
            <div className="flex-1 bg-white">
              <h2 className="flex h-[21px] items-center border-b border-[#a0a0a0] bg-[#f0f0f0] pl-[5px] font-bold">Akce</h2>
              <button type="button" className="mt-px flex h-[25px] w-full items-center justify-between bg-linear-to-b from-[#bad2eb] to-[#99b4d1] pl-[7px] pr-[7px]">
                Správa disků
                <svg viewBox="0 0 9 5" className="h-[5px] w-[9px]" aria-hidden="true"><path d="M0 5L4.500 0 9 5z" /></svg>
              </button>
              <button type="button" className="flex h-6 w-full items-center justify-between pl-[31px] pr-2">
                Další akce
                <svg viewBox="0 0 5 9" className="h-[9px] w-[5px]" aria-hidden="true"><path d="M0 0l5 4.500L0 9z" /></svg>
              </button>
            </div>
          </Sunken>
        </div>

        <footer className="flex h-[23px] shrink-0 justify-end border-t border-[#d7d7d7] py-px pr-0.5">
          <span className="w-[133px] border-l border-[#d7d7d7]" />
          <span className="w-[86px] border-l border-r border-[#d7d7d7]" />
        </footer>
      </section>
    </div>
  );
}

/* ── File explorer window ── */

const QUICK = [
  { label: "Plocha", icon: <DesktopIcon /> },
  { label: "Stažené soubory", icon: <DownArrowIcon /> },
  { label: "Dokumenty", icon: <DocIcon /> },
  { label: "Obrázky", icon: <PictureIcon /> },
];

const ROOTS = [
  { label: "OneDrive", icon: <CloudIcon /> },
  { label: "Tento počítač", icon: <MonitorIcon />, selected: true },
  { label: "Síť", icon: <NetworkIcon /> },
];

const FOLDERS = [
  { label: "Dokumenty", kind: "docs" },
  { label: "Hudba", kind: "music" },
  { label: "Obrázky", kind: "pictures" },
  { label: "Plocha", kind: "desktop" },
  { label: "Stažené soubory", kind: "downloads" },
  { label: "Videa", kind: "videos" },
];

function GroupHeading({ children }: { children: ReactNode }) {
  return (
    <h2 className="flex h-[27px] items-center gap-1 text-[14px] text-[#1e3287]">
      <Chevron dir="down" className="h-[11px] w-[11px] text-[#7a7a7a]" width={1.2} />
      {children}
      <span className="ml-1 h-px flex-1 bg-[#e2e2e2]" />
    </h2>
  );
}

function DriveTile({ name, info, used, system }: { name: string; info: string; used: number; system?: boolean }) {
  return (
    <li className="flex h-14 items-center gap-1">
      <LocalDriveIcon system={system} />
      <div className="w-[189px] pb-[3px] leading-[15px]">
        <div className="pb-px pl-px">{name}</div>
        <div className="my-px h-[13px] border border-[#bcbcbc] bg-[#e6e6e6]">
          <div className="h-full bg-[#26a0da]" style={{ width: `${used}%` }} />
        </div>
        <div className="pl-px text-[#6d6d6d]">{info}</div>
      </div>
    </li>
  );
}

function ExplorerWindow() {
  return (
    <section className="mb-[51px] ml-[27px] mr-[41px] mt-[41px] flex min-w-0 flex-col bg-white">
      <header className="flex h-[31px] shrink-0 items-center pl-[5px] pr-[18px]">
        <MonitorIcon />
        <span className="ml-[7px] h-3 w-px bg-[#9a9a9a]" />
        <span className="ml-[10px] flex"><CheckDocIcon /></span>
        <span className="ml-[10px] flex"><NewFolderIcon /></span>
        <svg viewBox="0 0 7 6" className="ml-2 h-1.5 w-[7px]" aria-hidden="true">
          <path d="M0 0.500h7" stroke="#000" />
          <path d="M0 2.500h7L3.500 6z" />
        </svg>
        <span className="ml-2 h-3 w-px bg-[#9a9a9a]" />
        <h1 className="ml-[7px] flex-1">Tento počítač</h1>
        <WindowControls />
      </header>

      <nav className="flex h-6 shrink-0 items-center border-b border-[#dadbdc] text-[#444]">
        <button type="button" className="flex h-[23px] w-[53px] items-center justify-center bg-[#1979ca] text-white">Soubor</button>
        <button type="button" className="ml-[14px]">Počítač</button>
        <button type="button" className="ml-7 flex-1 text-left">Zobrazení</button>
        <Chevron dir="down" className="h-[9px] w-[9px] text-[#8f8f8f]" width={1.4} />
        <button type="button" aria-label="Nápověda" className="ml-2.5 mr-1 flex h-3.5 w-3.5 items-center justify-center rounded-full bg-[#0f6fcb] text-[11px] font-bold leading-none text-white">
          ?
        </button>
      </nav>

      <div className="flex h-[35px] shrink-0 items-center pl-[10px] pr-3">
        <button type="button" aria-label="Zpět">
          <svg viewBox="0 0 12 12" className="h-3 w-3" fill="none" stroke="#dadada" strokeWidth="1.700"><path d="M12 6H1M6 1L1 6l5 5" /></svg>
        </button>
        <button type="button" aria-label="Vpřed" className="ml-[18px]">
          <svg viewBox="0 0 12 12" className="h-3 w-3" fill="none" stroke="#dadada" strokeWidth="1.700"><path d="M0 6h11M6 1l5 5-5 5" /></svg>
        </button>
        <Chevron dir="down" className="ml-[14px] h-[7px] w-[7px] text-[#dadada]" />
        <button type="button" aria-label="O úroveň výš" className="ml-3">
          <svg viewBox="0 0 12 12" className="h-3 w-3" fill="none" stroke="#6e6e6e" strokeWidth="1.800"><path d="M6 12V1M1 6l5-5 5 5" /></svg>
        </button>
        <div className="ml-[6px] flex h-[22px] min-w-0 flex-1 items-center border border-[#d9d9d9] pl-0.5">
          <MonitorIcon />
          <Chevron dir="right" className="ml-1.5 h-[7px] w-[7px] text-[#6e6e6e]" />
          <button type="button" className="ml-2 flex-1 pb-0.5 text-left">Tento počítač</button>
          <Chevron dir="down" className="mr-[5px] h-[9px] w-[9px] text-[#6e6e6e]" />
          <button type="button" aria-label="Aktualizovat" className="flex h-full w-5 items-center justify-center border-l border-[#d9d9d9]">
            <svg viewBox="0 0 12 12" className="h-3 w-3" fill="none" stroke="#6e6e6e" strokeWidth="1.500">
              <path d="M8.500 2.500a4.300 4.300 0 1 1-5 0" />
              <path d="M2 1.200h3v3.300" />
            </svg>
          </button>
        </div>
        <div className="ml-3 flex h-[22px] w-[202px] items-center border border-[#d9d9d9] pl-2 pr-2">
          <label htmlFor="search" className="sr-only">Hledat</label>
          <input id="search" type="search" placeholder="Prohledat: Tento počítač" className="min-w-0 flex-1 bg-transparent pb-0.5 outline-none placeholder:text-[#6d6d6d]" />
          <svg viewBox="0 0 12 12" className="h-3 w-3" fill="none" stroke="#6e6e6e" aria-hidden="true">
            <circle cx="7.500" cy="4.500" r="3.500" strokeWidth="1.500" />
            <path d="M5 7L0.500 11.500" strokeWidth="1.800" />
          </svg>
        </div>
      </div>

      <div className="flex min-h-0 flex-1">
        <aside className="flex w-[156px] shrink-0 flex-col border-r border-[#f0f0f0] pr-0.5 pt-[15px]">
          <ul>
            <li className="flex h-6 items-center gap-[5px] pl-[21px]"><StarIcon />Rychlý přístup</li>
            {QUICK.map((q) => (
              <li key={q.label} className="flex h-6 items-center gap-[5px] whitespace-nowrap pl-[29px] pr-[3px]">
                {q.icon}
                <span className="min-w-0 flex-1">{q.label}</span>
                <PinIcon />
              </li>
            ))}
          </ul>
          <ul className="mt-2 flex flex-col gap-2">
            {ROOTS.map((r) => (
              <li key={r.label} className={`flex h-6 items-center gap-[5px] pl-[21px] ${r.selected ? "bg-[#d9d9d9]" : ""}`}>
                {r.icon}
                {r.label}
              </li>
            ))}
          </ul>
        </aside>

        <main className="min-w-0 flex-1 pl-[7px] pr-[7px] pt-[5px]">
          <GroupHeading>Složky (6)</GroupHeading>
          <ul className="grid grid-cols-[254px_1fr] pl-3">
            {FOLDERS.map((f) => (
              <li key={f.label} className="flex h-14 items-center gap-[5px]">
                <FolderIcon kind={f.kind} />
                <span className="pb-0.5">{f.label}</span>
              </li>
            ))}
          </ul>
          <GroupHeading>Zařízení a jednotky (3)</GroupHeading>
          <ul className="grid grid-cols-[254px_1fr] pl-3">
            <DriveTile name="Místní disk (C:)" info="18,8 GB volných z 31,5 GB" used={40} system />
            <li className="flex h-14 items-center gap-[5px]">
              <VirtualBoxIcon />
              <div className="pb-[3px] leading-[15px]">
                <div>Jednotka CD-ROM (D:) VirtualBox</div>
                <div className="pb-px">Guest Additions</div>
                <div className="text-[#6d6d6d]">0 bajtů volných z 56,6 MB</div>
              </div>
            </li>
            <DriveTile name="Muj Disk (E:)" info="9,95 GB volných z 9,99 GB" used={0} />
          </ul>
          <GroupHeading>Umístění v síti (1)</GroupHeading>
          <ul className="pl-3">
            <li className="flex h-14 items-center gap-[5px]">
              <NetworkDriveIcon />
              <span className="pb-0.5">{"Vyuka (\\\\Server) (W:)"}</span>
            </li>
          </ul>
        </main>
      </div>

      <footer className="flex h-[26px] shrink-0 items-center pb-1 pl-[11px] pr-[7px] text-[#1e395b]">
        <span className="border-r border-[#f0f0f0] pr-2.5">Počet položek: 10</span>
        <svg viewBox="0 0 16 13" className="ml-auto h-[13px] w-4" shapeRendering="crispEdges" aria-hidden="true">
          <path d="M0.500 0.500h4v12h-4zM0.500 4.500h4M0.500 8.500h4" fill="#fff" stroke="#8b8b8b" />
          <path d="M6 2.500h4M12 2.500h4M6 6.500h4M12 6.500h4M6 10.500h4M12 10.500h4" stroke="#6e6e6e" />
          <path d="M2 2h1v1H2z" fill="#444" />
          <path d="M2 6h1v1H2z" fill="#3c7fd0" />
          <path d="M2 10h1v1H2z" fill="#d03c3c" />
        </svg>
        <PictureIcon className="ml-1.5" />
      </footer>
    </section>
  );
}

export default function App() {
  return (
    <div className="grid h-screen grid-cols-[991fr_849fr] overflow-hidden bg-white pt-px font-['Noto_Sans',sans-serif] text-[11px] leading-[15px] text-black">
      <ManagementWindow />
      <ExplorerWindow />
    </div>
  );
}
